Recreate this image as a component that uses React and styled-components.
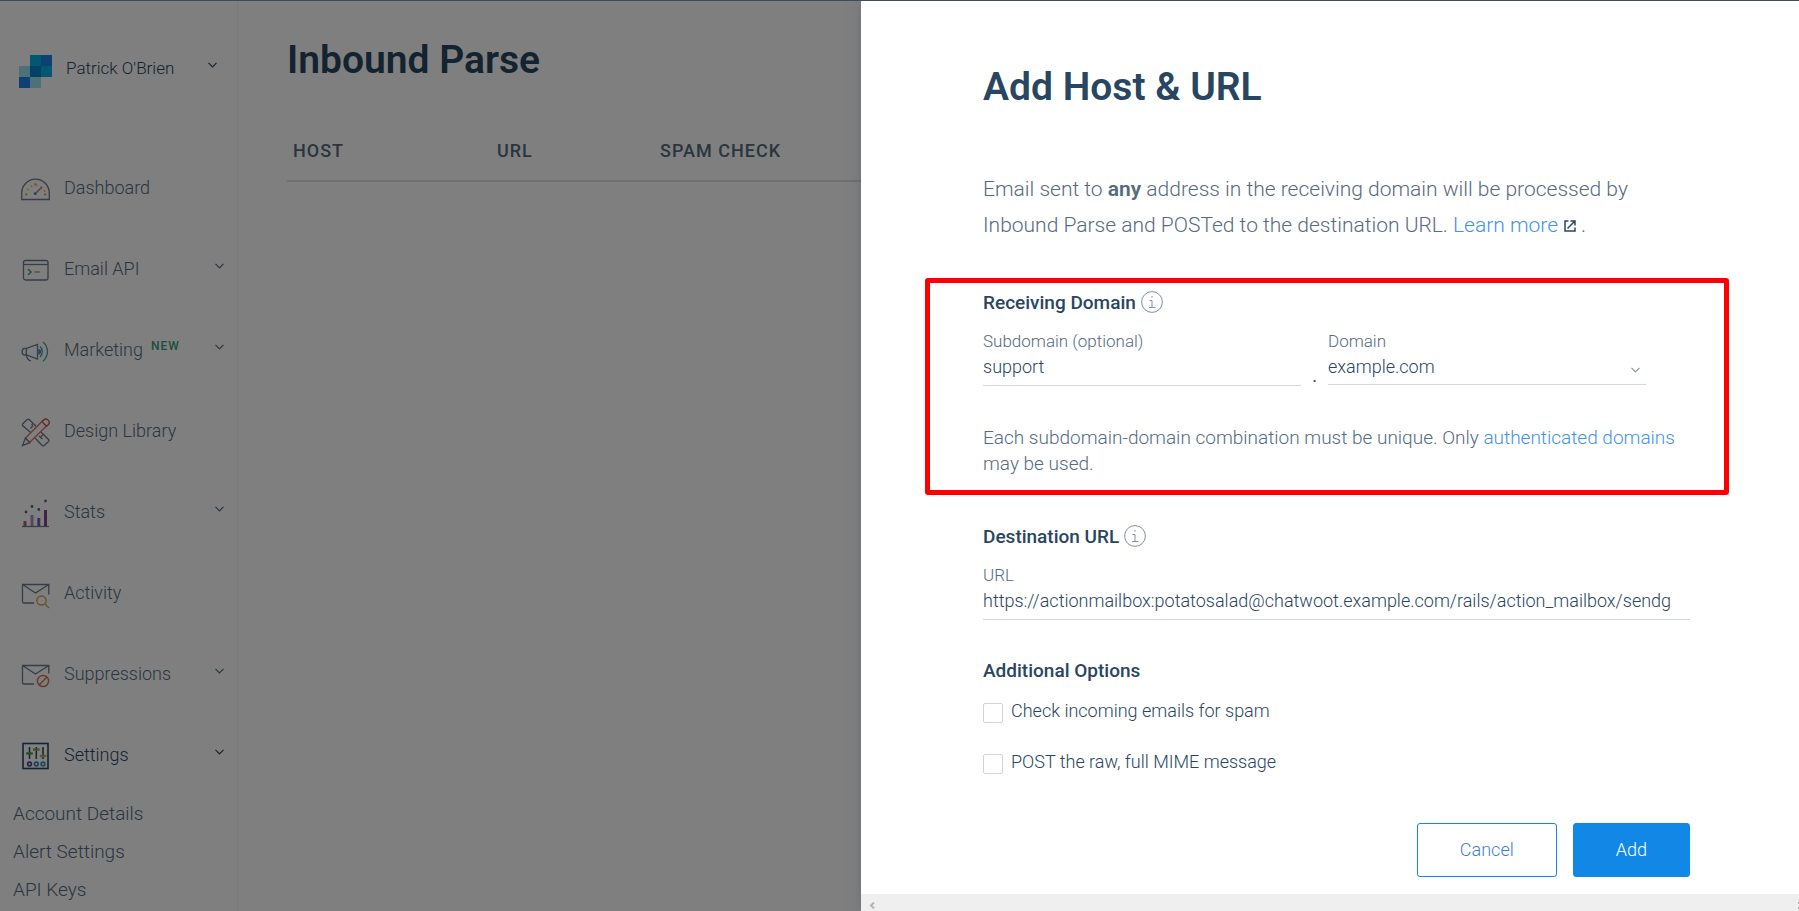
import React from "react";
import styled, { createGlobalStyle, css } from "styled-components";

const color = {
  navy: "#294661",
  slate: "#546b81",
  link: "#3f93e8",
  blue: "#1188e6",
  rule: "#d5d9df",
  icon: "#6a7a8d",
};

const GlobalStyle = createGlobalStyle`
  *, *::before, *::after { box-sizing: border-box; }
  body {
    margin: 0;
    background: #fff;
    color: ${color.navy};
    font-family: Roboto, "Liberation Sans", sans-serif;
    font-size: 18px;
    font-weight: 350;
  }
  a { text-decoration: none; }
`;

const Page = styled.div`
  height: 100vh;
  display: flex;
  flex-direction: column;
  border-top: 1px solid #3d4b5c;
  overflow: hidden;
`;

const Stage = styled.div`
  position: relative;
  flex: 1;
  min-height: 0;
  display: flex;
`;

/* ---------- sidebar ---------- */

const Sidebar = styled.aside`
  flex: 0 0 238px;
  border-right: 1px solid #f0f2f5;
  overflow: hidden;
`;

const AccountButton = styled.button`
  width: 100%;
  height: 34px;
  margin-top: 53px;
  padding: 0 20px 0 19px;
  display: flex;
  align-items: center;
  border: 0;
  background: none;
  color: ${color.navy};
  font: inherit;
  font-size: 17px;
  line-height: 20px;
  text-align: left;
`;

const AccountName = styled.span`
  flex: 1;
  margin: 0 0 6px 14px;
`;

const Nav = styled.nav`
  margin-top: 59px;
`;

const NavItem = styled.a`
  height: 81px;
  padding: 0 13px 0 21px;
  display: flex;
  align-items: center;
  color: ${(p) => (p.$active ? color.navy : color.slate)};
`;

const NavIcon = styled.svg`
  flex: none;
  width: 29px;
  height: 29px;
  margin: 3px 14px 0 0;
  fill: none;
  stroke: ${(p) => (p.$active ? color.navy : color.icon)};
  stroke-width: 1.3;
`;

const NavLabel = styled.span`
  flex: 1;
  display: flex;
`;

const NewTag = styled.sup`
  margin-left: 8px;
  color: #2fa374;
  font-size: 12px;
  font-weight: 500;
  letter-spacing: 1px;
  line-height: 14px;
`;

const ChevronSvg = styled.svg`
  flex: none;
  width: 9px;
  height: 6px;
  margin-bottom: ${(p) => p.$raise || "0"};
  fill: none;
  stroke: currentColor;
  stroke-width: 1.2;
`;

const SubNav = styled.div`
  padding-left: 13px;
`;

const SubLink = styled.a`
  display: block;
  color: ${color.slate};
  font-size: 19px;
  font-weight: 300;
  line-height: 38px;
`;

/* ---------- main page ---------- */

const Main = styled.main`
  flex: 1;
  min-width: 0;
  padding: 35px 49px 0;
`;

const titleText = css`
  margin: 0;
  color: ${color.navy};
  font-size: 39px;
  font-weight: 600;
  line-height: 48px;
`;

const PageTitle = styled.h1`
  ${titleText}
`;

const HostTable = styled.table`
  width: 100%;
  margin-top: 37px;
  border-spacing: 0;
  table-layout: fixed;
`;

const HeadCell = styled.th`
  width: ${(p) => p.$width || "auto"};
  height: 61px;
  padding: 0 6px;
  border-bottom: 2px solid #dfe1e5;
  color: ${color.slate};
  font-weight: 500;
  letter-spacing: 1px;
  text-align: left;
`;

/* ---------- drawer ---------- */

const Overlay = styled.div`
  position: absolute;
  inset: 0;
  display: flex;
  justify-content: flex-end;
  background: rgba(0, 0, 0, 0.5);
`;

const Drawer = styled.section`
  flex: 0 0 52.14%;
  display: flex;
  flex-direction: column;
  background: #fff;
  box-shadow: 0 0 14px rgba(41, 70, 97, 0.25);
`;

const DrawerBody = styled.form`
  flex: 1;
  min-height: 0;
  margin: 0;
  padding: 62px 109px 0 122px;
`;

const DrawerTitle = styled.h2`
  ${titleText}
`;

const Intro = styled.p`
  margin: 60px 0 0;
  color: ${color.slate};
  font-size: 21px;
  line-height: 36px;
`;

const Link = styled.a`
  color: ${color.link};
`;

const Strong = styled.strong`
  font-weight: 600;
`;

const ExternalSvg = styled.svg`
  width: 12px;
  height: 12px;
  margin: 0 5px 0 6px;
  fill: none;
  stroke: ${color.navy};
  stroke-width: 1.5;
`;

const Group = styled.div`
  position: relative;
  margin-top: ${(p) => (p.$tight ? "39px" : "48px")};
`;

const Highlight = styled.div`
  position: absolute;
  inset: -13px -39px -18px -58px;
  border: 5px solid #f00;
  border-radius: 3px;
  pointer-events: none;
`;

const GroupTitle = styled.h3`
  margin: 0;
  display: flex;
  align-items: center;
  gap: 5px;
  color: ${color.navy};
  font-size: 19px;
  font-weight: 500;
  line-height: 24px;
`;

const InfoSvg = styled.svg`
  width: 22px;
  height: 22px;
  margin-bottom: 2px;
  fill: none;
  stroke: #8390a2;
`;

const DomainRow = styled.div`
  display: flex;
  margin-right: 44px;
`;

const Dot = styled.span`
  flex: 0 0 27px;
  align-self: flex-end;
  font-weight: 400;
  line-height: 20px;
  text-align: center;
`;

const Field = styled.div`
  position: relative;
  flex: 1;
  min-width: 0;
  margin-top: 16px;
`;

const FieldLabel = styled.label`
  display: block;
  color: ${color.slate};
  font-size: 17px;
  font-weight: 300;
  line-height: 20px;
`;

const control = css`
  display: block;
  width: 100%;
  border: 0;
  border-bottom: 1px solid ${color.rule};
  border-radius: 0;
  outline: 0;
  background: transparent;
  color: ${color.navy};
  font: inherit;
`;

const TextInput = styled.input`
  ${control}
  height: 35px;
  padding: 0 0 3px;
`;

const Select = styled.select`
  ${control}
  height: 34px;
  padding: 0 0 3px;
  appearance: none;
`;

const SelectArrow = styled.span`
  position: absolute;
  right: 6px;
  bottom: 13px;
  display: flex;
  color: #8b96a8;
  pointer-events: none;
`;

const Hint = styled.p`
  margin: 39px 0 0;
  color: ${color.slate};
  font-size: 19px;
  font-weight: 300;
  line-height: 26px;
`;

const Options = styled.div`
  margin-top: 20px;
  display: flex;
  flex-direction: column;
  gap: 31px;
`;

const Option = styled.label`
  display: flex;
  gap: 8px;
  line-height: 16px;
`;

const Checkbox = styled.input`
  flex: none;
  width: 20px;
  height: 20px;
  margin: 0;
  border: 1px solid #cfd4db;
  border-radius: 2px;
  background: #fff;
  appearance: none;
  &:checked { background: ${color.blue}; }
`;

const Actions = styled.div`
  margin-top: 49px;
  display: flex;
  justify-content: flex-end;
  gap: 16px;
`;

const Button = styled.button`
  height: 54px;
  padding: 0 42px 2px;
  border: 1px solid ${color.blue};
  border-radius: 3px;
  background: ${(p) => (p.$primary ? color.blue : "#fff")};
  color: ${(p) => (p.$primary ? "#fff" : "#3a7fe0")};
  font: inherit;
`;

const ScrollTrack = styled.div`
  flex: 0 0 17px;
  display: flex;
  justify-content: space-between;
  align-items: flex-end;
  padding: 0 0 2px 8px;
  background: #efefef;
`;

const ScrollArrow = styled.svg`
  width: ${(p) => p.$width};
  height: 7px;
  fill: none;
  stroke: #b4b4b4;
  stroke-width: 2;
`;

/* ---------- icons ---------- */

const Chevron = ({ raise }) => (
  <ChevronSvg $raise={raise} viewBox="0 0 9 6" aria-hidden="true">
    <path d="M.5 .8 4.5 4.8 8.5 .8" />
  </ChevronSvg>
);

const Logo = () => (
  <svg width="33" height="33" viewBox="0 0 33 33" aria-hidden="true">
    <path fill="#9de1f3" d="M0 11h11v11H0zM11 22h11v11H11z" />
    <path fill="#1a82e2" d="M0 22h11v11H0zM22 0h11v11H22z" />
    <path fill="#00b3e3" d="M11 0h11v11H11zM22 11h11v11H22z" />
    <path fill="#0086c9" d="M11 11h11v11H11z" />
  </svg>
);

const InfoIcon = () => (
  <InfoSvg viewBox="0 0 22 22" aria-hidden="true">
    <circle cx="11" cy="11" r="10.4" />
    <path d="M8.5 9.5H11v7M8 16.5h6.5M11 5v1.8" />
  </InfoSvg>
);

const icons = {
  dashboard: (
    <>
      <path d="M.7 24.5V18a13.8 13.8 0 0 1 27.6 0v6.5z" />
      <path stroke="#dcbc50" strokeWidth="1.6" strokeDasharray="1.5 3.6" d="M5 20a9.7 9.7 0 0 1 19.4 0" />
      <path stroke="#dcbc50" strokeWidth="2.2" d="M13.2 9.4h2.6M4 19.4h2.4M23 19.4h2.4" />
      <path stroke="#de7660" strokeWidth="1.6" d="M15.5 17.5 21 12" />
      <circle cx="14.3" cy="18.5" r="1.6" fill="#4a8cc4" stroke="none" />
    </>
  ),
  email: (
    <>
      <rect x="2.5" y="4.5" width="24.5" height="19.5" rx="2" />
      <path d="M2.5 8.5H27" />
      <path stroke="#3fae84" strokeWidth="1.6" d="m7 13 3 3-3 3" />
      <path stroke="#88b458" strokeWidth="1.4" d="M13.5 16H19" />
    </>
  ),
  marketing: (
    <>
      <path d="M16.5 7.5V22L5.5 18h-2C1.5 18 1.2 16.5 1.2 14.7s.3-3.3 2.3-3.3h2zM5.3 11.4V18" />
      <path stroke="#6a6fae" d="M5.5 18c.2 3.2 1.8 5.2 4.5 6" />
      <path fill="#4a8cc4" stroke="none" d="M17.3 12a2.8 2.8 0 0 1 0 5.6z" />
      <path stroke="#3f9cbc" d="M19 9.5c3 2.8 3 7.7 0 10.5" />
      <path stroke="#3fae84" d="M22 5c6 5.5 6 13.5 0 19.3" />
    </>
  ),
  design: (
    <>
      <path d="M12 16.5 1.8 7.8c-.6-.7-.6-1.4 0-2L6.2 1.5c.7-.6 1.3-.6 2 0l7 7M19.5 13.5l8 8c.6.7.6 1.3 0 2l-4.3 4c-.7.6-1.3.6-2 0L14 20M9.5 10.5l2.5-3M10.500 7l1-1M20 18.500l2-2M18 18l3.500 3" />
      <path fill="#fff" stroke="#d8745c" d="M4.5 20 22.500 2 27 6.500l-18.500 18z" />
      <path fill="#fff" stroke="#c45454" d="m21 3.700 1.800-1.800c2.800-2.500 7.200 1.600 4.600 4.600l-1.900 1.800z" />
      <path fill="#fff" d="m4.5 20-3 7.500 7.200-2.800z" />
    </>
  ),
  stats: (
    <>
      <path stroke="#c8566c" strokeWidth="3" d="M4 27v-5" />
      <path stroke="#b58cbc" strokeWidth="3" d="M11 27V16" />
      <path stroke="#7a5cc4" strokeWidth="3" d="M17.8 27v-8" />
      <path stroke="#864494" strokeWidth="3" d="M24.5 27V11" />
      <path d="M1 27.5h27" />
      <g fill="#54687c" stroke="none">
        <circle cx="5" cy="13" r="1.4" />
        <circle cx="11" cy="7.5" r="1.4" />
        <circle cx="17.8" cy="10.5" r="1.4" />
        <circle cx="24.5" cy="2" r="1.4" />
      </g>
    </>
  ),
  activity: (
    <>
      <path d="M13 23H3q-1.5 0-1.5-1.5v-17h26.3v10M1.500 4.500l13 8.500 13.300-8.500" />
      <circle cx="20.5" cy="20.5" r="4.6" stroke="#dca450" strokeWidth="1.5" />
      <path stroke="#dca450" strokeWidth="1.5" d="m24 24 4 4" />
    </>
  ),
  suppressions: (
    <>
      <path d="M13 23H3q-1.5 0-1.5-1.5v-17h26.3v8M1.500 4.500l13 8.500 13.300-8.500" />
      <circle cx="22" cy="20" r="5.6" stroke="#d8705c" strokeWidth="1.5" />
      <path stroke="#d8705c" strokeWidth="1.5" d="m18 24 8-8" />
    </>
  ),
  settings: (
    <>
      <rect x="2" y="1.5" width="25" height="25" strokeWidth="1.6" />
      <path strokeWidth="1.5" d="M8.5 5v12M15.3 5v12M22 5v12" />
      <path stroke="#4a9a4a" strokeWidth="2.4" d="M5.2 11.5h6.6" />
      <path stroke="#86a840" strokeWidth="2.4" d="M12 7.5h6.6" />
      <path stroke="#aab83c" strokeWidth="2.4" d="M18.8 14h6.6" />
      <circle cx="8.5" cy="22" r="1.9" stroke="#44469a" strokeWidth="1.6" />
      <circle cx="15.3" cy="22" r="1.9" stroke="#3a80bc" strokeWidth="1.6" />
      <circle cx="22" cy="22" r="1.9" stroke="#2a9aa6" strokeWidth="1.6" />
    </>
  ),
};

const navItems = [
  { id: "dashboard", label: "Dashboard" },
  { id: "email", label: "Email API", expandable: true },
  { id: "marketing", label: "Marketing", tag: "NEW", expandable: true },
  { id: "design", label: "Design Library" },
  { id: "stats", label: "Stats", expandable: true },
  { id: "activity", label: "Activity" },
  { id: "suppressions", label: "Suppressions", expandable: true },
  { id: "settings", label: "Settings", expandable: true, active: true },
];

const settingsLinks = ["Account Details", "Alert Settings", "API Keys"];

export default function App() {
  return (
    <>
      <GlobalStyle />
      <Page>
        <Stage>
          <Sidebar>
            <AccountButton type="button">
              <Logo />
              <AccountName>Patrick O'Brien</AccountName>
              <Chevron raise="12px" />
            </AccountButton>
            <Nav>
              {navItems.map((item) => (
                <NavItem key={item.id} href={`#${item.id}`} $active={item.active}>
                  <NavIcon viewBox="0 0 29 29" $active={item.active} aria-hidden="true">
                    {icons[item.id]}
                  </NavIcon>
                  <NavLabel>
                    {item.label}
                    {item.tag && <NewTag>{item.tag}</NewTag>}
                  </NavLabel>
                  {item.expandable && <Chevron raise="5px" />}
                </NavItem>
              ))}
            </Nav>
            <SubNav>
              {settingsLinks.map((label) => (
                <SubLink key={label} href="#settings">{label}</SubLink>
              ))}
            </SubNav>
          </Sidebar>

          <Main>
            <PageTitle>Inbound Parse</PageTitle>
            <HostTable>
              <thead>
                <tr>
                  <HeadCell $width="204px">HOST</HeadCell>
                  <HeadCell $width="163px">URL</HeadCell>
                  <HeadCell>SPAM CHECK</HeadCell>
                </tr>
              </thead>
            </HostTable>
          </Main>

          <Overlay>
            <Drawer role="dialog" aria-labelledby="drawer-title">
              <DrawerBody onSubmit={(e) => e.preventDefault()}>
                <DrawerTitle id="drawer-title">Add Host &amp; URL</DrawerTitle>
                <Intro>
                  Email sent to <Strong>any</Strong> address in the receiving domain will be
                  processed by Inbound Parse and POSTed to the destination URL.{" "}
                  <Link href="#learn-more">
                    Learn more
                    <ExternalSvg viewBox="0 0 12 12" aria-hidden="true">
                      <path d="M4.5 1H1v10h10V7.5M6.5 1H11v4.5M11 1 3.5 8.5" />
                    </ExternalSvg>
                  </Link>
                  .
                </Intro>

                <Group>
                  <GroupTitle>
                    Receiving Domain
                    <InfoIcon />
                  </GroupTitle>
                  <DomainRow>
                    <Field>
                      <FieldLabel htmlFor="subdomain">Subdomain (optional)</FieldLabel>
                      <TextInput id="subdomain" type="text" defaultValue="support" />
                    </Field>
                    <Dot>.</Dot>
                    <Field>
                      <FieldLabel htmlFor="domain">Domain</FieldLabel>
                      <Select id="domain" defaultValue="example.com">
                        <option>example.com</option>
                      </Select>
                      <SelectArrow>
                        <Chevron />
                      </SelectArrow>
                    </Field>
                  </DomainRow>
                  <Hint>
                    Each subdomain-domain combination must be unique. Only{" "}
                    <Link href="#authenticated-domains">authenticated domains</Link> may be used.
                  </Hint>
                  <Highlight />
                </Group>

                <Group>
                  <GroupTitle>
                    Destination URL
                    <InfoIcon />
                  </GroupTitle>
                  <Field>
                    <FieldLabel htmlFor="url">URL</FieldLabel>
                    <TextInput
                      id="url"
                      type="text"
                      defaultValue="https://actionmailbox:potatosalad@chatwoot.example.com/rails/action_mailbox/sendg"
                    />
                  </Field>
                </Group>

                <Group $tight>
                  <GroupTitle>Additional Options</GroupTitle>
                  <Options>
                    <Option>
                      <Checkbox type="checkbox" />
                      Check incoming emails for spam
                    </Option>
                    <Option>
                      <Checkbox type="checkbox" />
                      POST the raw, full MIME message
                    </Option>
                  </Options>
                </Group>

                <Actions>
                  <Button type="button">Cancel</Button>
                  <Button type="submit" $primary>Add</Button>
                </Actions>
              </DrawerBody>
              <ScrollTrack>
                <ScrollArrow $width="6px" viewBox="0 0 6 7" aria-hidden="true">
                  <path d="M5 .5 2 3.5 5 6.5" />
                </ScrollArrow>
                <ScrollArrow $width="1px" viewBox="0 0 1 7" aria-hidden="true">
                  <path d="M0 1h1M0 6h1" />
                </ScrollArrow>
              </ScrollTrack>
            </Drawer>
          </Overlay>
        </Stage>
      </Page>
    </>
  );
}
